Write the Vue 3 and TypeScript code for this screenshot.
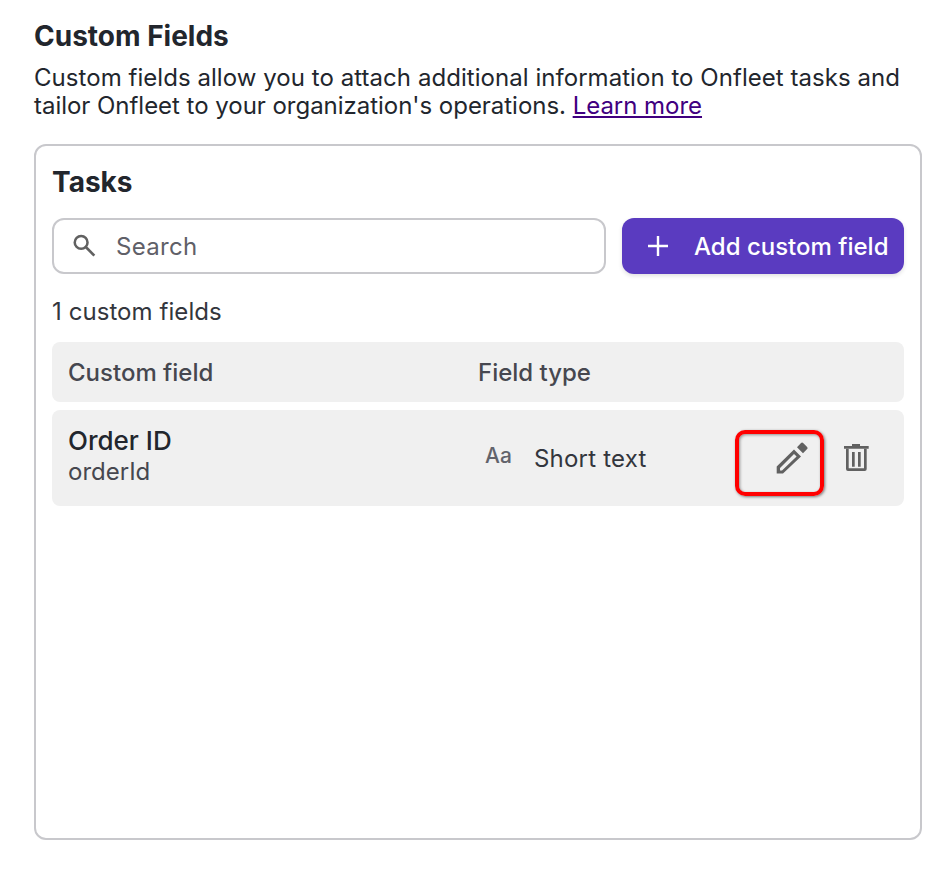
<script setup lang="ts">
interface FieldRow {
  name: string
  key: string
  type: string
}
const rows: FieldRow[] = [{ name: 'Order ID', key: 'orderId', type: 'Short text' }]
</script>

<template>
  <main class="page">
    <h1 class="title">Custom Fields</h1>
    <p class="intro">
      <span class="line-one">Custom fields allow you to attach additional information to Onfleet tasks and</span><br />
      <span class="line-two">tailor Onfleet to your organization's operations. <a class="link" href="#">Learn more</a></span>
    </p>
    <section class="card">
      <h2 class="card-title">Tasks</h2>
      <div class="toolbar">
        <label class="search">
          <svg class="search-icon" viewBox="0 0 24 24" width="32" height="32">
            <circle cx="9.1" cy="9.3" r="4.8" fill="none" stroke="currentColor" stroke-width="1.9" />
            <path d="M12.6 12.8 19 19.2" fill="none" stroke="currentColor" stroke-width="2" />
          </svg>
          <span class="search-text">Search</span>
        </label>
        <button class="add" type="button">
          <svg viewBox="0 0 24 24" width="24" height="24">
            <path d="M12 2v20M2 12h20" fill="none" stroke="currentColor" stroke-width="2.4" />
          </svg>
          <span>Add custom field</span>
        </button>
      </div>
      <div class="count">{{ rows.length }} custom fields</div>
      <div class="row head">
        <div class="col-name">Custom field</div>
        <div class="col-type">Field type</div>
      </div>
      <div v-for="row in rows" :key="row.key" class="row item">
        <div class="col-name item-name">
          <div class="name">{{ row.name }}</div>
          <div class="key">{{ row.key }}</div>
        </div>
        <div class="col-type type-cell">
          <span class="aa">Aa</span>
          <span class="type-text">{{ row.type }}</span>
        </div>
        <div class="actions">
          <span class="edit">
            <svg viewBox="0 0 32 32" width="32" height="32">
              <path fill-rule="evenodd" fill="#616161" d="M0.7 24.6 18 7.6l7 7-18 16.9H0.7zM4 26v2.4h2L20.6 14.6 18 12z" />
              <path fill="#616161" d="M21 5.2 24.8 1.2a1.8 1.8 0 0 1 2.6 0l3.5 3.5a1.8 1.8 0 0 1 0 2.6L27 11.2z" />
            </svg>
            <span class="highlight"></span>
          </span>
          <svg class="trash" viewBox="0 0 32 32" width="32" height="32">
            <path fill="#616161" d="M12 2h8v2h8.7v2.7H4V4h8z" />
            <path fill="#616161" fill-rule="evenodd" d="M6 6.7h20.7V27a2 2 0 0 1-2 2H8a2 2 0 0 1-2-2zM8.7 6.7V26.3h15.3V6.7z" />
            <path fill="#616161" d="M12 10h2.7v14.7H12zM18 10h2.7v14.7H18z" />
          </svg>
        </div>
      </div>
    </section>
  </main>
</template>

<style>
html,
body {
  margin: 0;
  background: #fff;
}
</style>

<style scoped>
.page {
  box-sizing: border-box;
  width: 952px;
  height: 878px;
  padding: 20px 30px 38px 34px;
  display: flex;
  flex-direction: column;
  font-family: Inter, "Liberation Sans", sans-serif;
  color: #22262d;
  overflow: hidden;
}
.title {
  margin: 0;
  font-size: 28px;
  line-height: 32px;
  font-weight: 700;
}
.intro {
  margin: 12px 0 0;
  font-size: 24px;
  line-height: 28px;
  font-weight: 400;
  white-space: nowrap;
}
.line-one {
  letter-spacing: 0.05px;
}
.line-two {
  letter-spacing: -0.03px;
}
.link {
  color: #40007f;
  text-decoration: underline;
}
.card {
  box-sizing: border-box;
  margin-top: 24px;
  flex: 1;
  border: 2px solid #c8c8cc;
  border-radius: 12px;
  padding: 16px;
}
.card-title {
  margin: 0;
  font-size: 28px;
  line-height: 40px;
  font-weight: 700;
}
.toolbar {
  display: flex;
  gap: 16px;
  margin-top: 16px;
}
.search {
  box-sizing: border-box;
  flex: 1;
  height: 56px;
  border: 2px solid #c8c8cc;
  border-radius: 12px;
  display: flex;
  align-items: center;
  padding-left: 15px;
  gap: 15px;
  font-size: 24px;
  color: #5f6068;
}
.search-text {
  letter-spacing: 0.3px;
}
.search-icon {
  color: #616161;
}
.add {
  box-sizing: border-box;
  width: 282px;
  height: 56px;
  border: 0;
  border-radius: 12px;
  background: #5a3bc0;
  color: #fff;
  display: flex;
  align-items: center;
  padding: 0 0 0 24px;
  gap: 24px;
  font: 500 24px Inter, "Liberation Sans", sans-serif;
  box-shadow: 0 2px 4px rgba(0, 0, 0, 0.12);
}
.count {
  margin-top: 22px;
  font-size: 24px;
  line-height: 32px;
  color: #33363d;
  letter-spacing: 0.07px;
}
.row {
  display: flex;
  align-items: center;
  border-radius: 8px;
  background: #f0f0f0;
  padding-left: 16px;
}
.head {
  margin-top: 14px;
  height: 60px;
  font-size: 24px;
  font-weight: 500;
  color: #46474f;
}
.item {
  margin-top: 8px;
  height: 96px;
}
.col-name {
  width: 410px;
}
.item-name {
  padding-bottom: 4px;
}
.name {
  margin-bottom: 1px;
  font-size: 26px;
  line-height: 30px;
  font-weight: 500;
  color: #22262d;
}
.key {
  font-size: 24px;
  line-height: 30px;
  color: #46474f;
}
.type-cell {
  display: flex;
  align-items: center;
  width: 298px;
  padding-left: 7px;
  box-sizing: border-box;
}
.aa {
  width: 49px;
  font-size: 21px;
  font-weight: 500;
  color: #62636b;
  margin-top: -6px;
}
.type-text {
  font-size: 24px;
  color: #33363d;
  letter-spacing: 0.2px;
}
.actions {
  display: flex;
  align-items: center;
  gap: 32px;
}
.edit {
  position: relative;
  display: block;
  height: 32px;
}
.highlight {
  position: absolute;
  left: -41px;
  top: -12px;
  width: 89px;
  height: 66px;
  box-sizing: border-box;
  border: 4px solid #f00;
  border-radius: 10px;
  box-shadow: 1px 1px 3px rgba(0, 0, 0, 0.5), inset 1px 1px 3px rgba(0, 0, 0, 0.4);
}
</style>
